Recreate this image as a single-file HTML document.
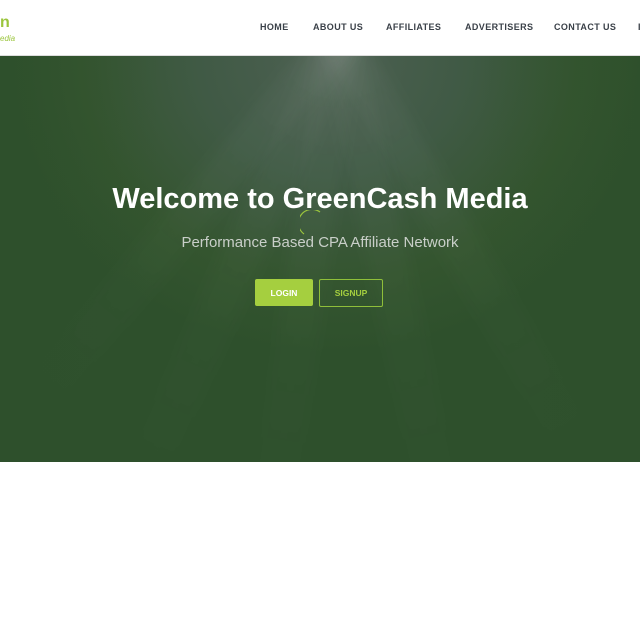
<!DOCTYPE html>
<html><head><style>
body{margin:0;width:640px;height:640px;overflow:hidden;background:#fff;font-family:"Liberation Sans",sans-serif;position:relative}
.hdr{position:absolute;top:0;left:0;width:640px;height:55px;background:#fff;border-bottom:1px solid #ddd}
.nav a{position:absolute;top:22px;font-size:9px;font-weight:bold;letter-spacing:.4px;color:#3a4048}
.hero{position:absolute;top:56px;left:0;width:640px;height:406px;
background:radial-gradient(ellipse 330px 300px at 330px 0px,#4d6052 0%,#405a45 40%,#34552f 75%,#2e502c 100%);overflow:hidden}
.ray{position:absolute;top:-20px;width:40px;height:480px;background:linear-gradient(#ffffff0a,#ffffff00);transform-origin:top center;filter:blur(6px)}
h1{position:absolute;top:183px;left:0;width:640px;text-align:center;margin:0;color:#fff;font-size:29px;font-weight:bold}
.sub{position:absolute;top:234px;left:0;width:640px;text-align:center;color:#c9cfc9;font-size:15px;font-weight:300}
.btn{position:absolute;top:279px;height:27px;font-size:8.5px;font-weight:bold;display:flex;align-items:center;justify-content:center;border-radius:2px}
</style></head><body>
<div class="hdr">
<div style="position:absolute;left:0;top:14px;color:#9bc53d;font-weight:bold;font-size:16px">n</div>
<div style="position:absolute;left:0;top:34px;color:#9bc53d;font-style:italic;font-size:8px">edia</div>
<div class="nav">
<a style="left:260px">HOME</a><a style="left:313px">ABOUT US</a><a style="left:386px">AFFILIATES</a><a style="left:465px">ADVERTISERS</a><a style="left:554px">CONTACT US</a><a style="left:638px">I</a>
</div></div>
<div class="hero">
<div class="ray" style="left:320px;transform:rotate(-30deg)"></div>
<div class="ray" style="left:320px;transform:rotate(-12deg)"></div>
<div class="ray" style="left:320px;transform:rotate(8deg)"></div>
<div class="ray" style="left:320px;transform:rotate(24deg)"></div>
<div class="ray" style="left:320px;transform:rotate(40deg)"></div>
<div style="position:absolute;left:0;top:0;width:640px;height:406px;background:linear-gradient(90deg,#2d4f2b55,transparent 25%,transparent 75%,#2d4f2b55)"></div>
</div>
<h1>Welcome to GreenCash Media</h1>
<svg style="position:absolute;left:300px;top:210px" width="24" height="30"><path d="M20 2 A12 12 0 0 0 4 24" fill="none" stroke="#9bc53d" stroke-width="1.2"/></svg>
<div class="sub">Performance Based CPA Affiliate Network</div>
<div class="btn" style="left:255px;width:58px;background:#a5cf3f;color:#fff">LOGIN</div>
<div class="btn" style="left:319px;width:64px;border:1px solid #8fbf3a;color:#a5cf3f;box-sizing:border-box;height:28px">SIGNUP</div>
</body></html>
